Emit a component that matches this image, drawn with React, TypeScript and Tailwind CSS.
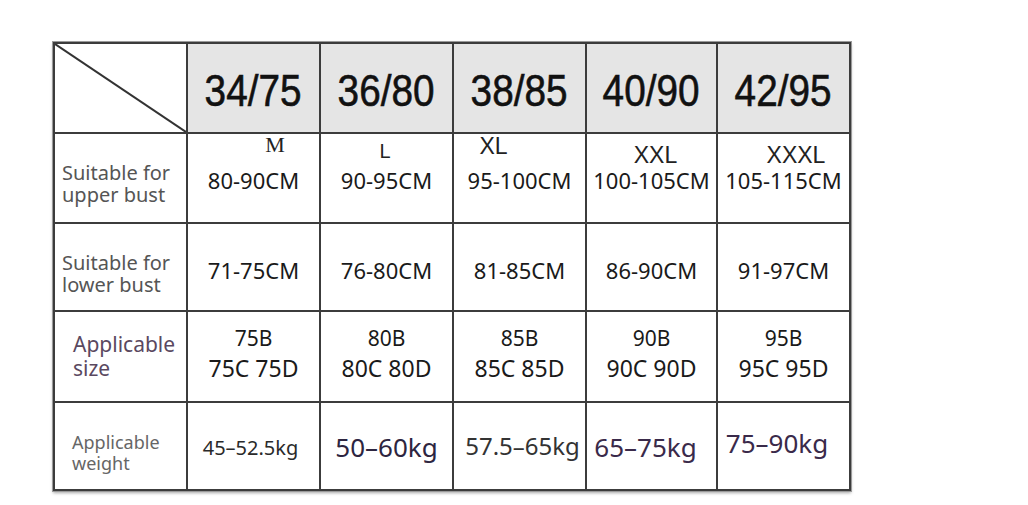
import React from "react";

const headers = ["34/75", "36/80", "38/85", "40/90", "42/95"];

// size letters above upper bust values, each one sits a little differently
const sizeLabels = [
    { text: "M", cls: "font-['Liberation_Serif',serif] text-[22px] leading-[22px] pt-0 pl-[43px]" },
    { text: "L", cls: "font-['Liberation_Sans',sans-serif] text-[20px] leading-[20px] pt-[7px] pr-[3px]" },
    { text: "XL", cls: "font-['Liberation_Sans',sans-serif] text-[23px] leading-[23px] pt-[1px] pr-[52px]" },
    { text: "XXL", cls: "font-['Liberation_Sans',sans-serif] text-[23px] leading-[23px] pt-[10px] pl-[8px]" },
    { text: "XXXL", cls: "font-['Liberation_Sans',sans-serif] text-[23px] leading-[23px] pt-[10px] pl-[25px]" },
];

const upperBust = ["80-90CM", "90-95CM", "95-100CM", "100-105CM", "105-115CM"];
const lowerBust = ["71-75CM", "76-80CM", "81-85CM", "86-90CM", "91-97CM"];
const cups = [
    ["75B", "75C 75D"],
    ["80B", "80C 80D"],
    ["85B", "85C 85D"],
    ["90B", "90C 90D"],
    ["95B", "95C 95D"],
];
const weights = [
    { text: "45–52.5kg", cls: "text-[20px] text-[#2a2a2a] pt-[35px] pr-[6px]" },
    { text: "50–60kg", cls: "text-[26px] text-[#2d2540] pt-[31px]" },
    { text: "57.5–65kg", cls: "text-[24px] text-[#333] pt-[31px] pl-[6px]" },
    { text: "65–75kg", cls: "text-[26px] text-[#3a2a4a] pt-[31px] pr-[12px]" },
    { text: "75–90kg", cls: "text-[26px] text-[#3a2a4a] pt-[27px] pr-[13px]" },
];

const cols = "grid grid-cols-[131px_131px_131px_131px_129px_131px] grid-rows-[88px_88px_86px_89px_86px] gap-[2px]";

export default function App() {
    return (
        <div className="w-[1028px] h-[505px] bg-white font-['Noto_Sans',sans-serif] text-[#1a1a1a] pt-[42px] pl-[53px]">
            <div className={`${cols} w-max bg-[#3c3c3c] p-[2px] shadow-[0_0_0_1px_#9a9a9a,0_2px_3px_rgba(0,0,0,0.35)]`}>
                {/* header row */}
                <div className="bg-white">
                    <svg className="w-full h-full" viewBox="0 0 100 100" preserveAspectRatio="none">
                        <line x1="0" y1="0" x2="100" y2="100" stroke="#333" strokeWidth="2" vectorEffect="non-scaling-stroke" />
                    </svg>
                </div>
                {headers.map((h) => (
                    <div key={h} className="bg-[#e5e5e5] flex justify-center pt-[25px]">
                        <span className="inline-block scale-x-[0.88] font-['Liberation_Sans',sans-serif] text-[44px] leading-[44px] text-[#111] [-webkit-text-stroke:0.6px_#111]">
                            {h}
                        </span>
                    </div>
                ))}

                {/* upper bust */}
                <div className="bg-white pt-[28px] pl-[7px] text-[20px] leading-[22px] text-[#555]">
                    <div>Suitable for</div>
                    <div>upper bust</div>
                </div>
                {upperBust.map((v, i) => (
                    <div key={v} className="bg-white flex flex-col">
                        <div className="h-[35px]">
                            <div className={`text-center text-[#222] ${sizeLabels[i].cls}`}>{sizeLabels[i].text}</div>
                        </div>
                        <div className="text-center text-[22px] leading-[22px] whitespace-nowrap">{v}</div>
                    </div>
                ))}

                {/* lower bust */}
                <div className="bg-white pt-[28px] pl-[7px] text-[20px] leading-[22px] text-[#555]">
                    <div>Suitable for</div>
                    <div>lower bust</div>
                </div>
                {lowerBust.map((v) => (
                    <div key={v} className="bg-white text-center pt-[35px] text-[22px] leading-[22px]">
                        {v}
                    </div>
                ))}

                {/* cup size */}
                <div className="bg-white pt-[20px] pl-[18px] text-[21px] leading-[24px] text-[#5a4860]">
                    <div>Applicable</div>
                    <div>size</div>
                </div>
                {cups.map(([a, b]) => (
                    <div key={a} className="bg-white text-center pt-[16px]">
                        <div className="text-[21px] leading-[21px]">{a}</div>
                        <div className="mt-[8px] text-[23px] leading-[23px] whitespace-nowrap">{b}</div>
                    </div>
                ))}

                {/* weight */}
                <div className="bg-white pt-[29px] pl-[17px] text-[18px] leading-[21px] text-[#666]">
                    <div>Applicable</div>
                    <div>weight</div>
                </div>
                {weights.map((w) => (
                    <div key={w.text} className={`bg-white text-center leading-none whitespace-nowrap ${w.cls}`}>
                        {w.text}
                    </div>
                ))}
            </div>
        </div>
    );
}
